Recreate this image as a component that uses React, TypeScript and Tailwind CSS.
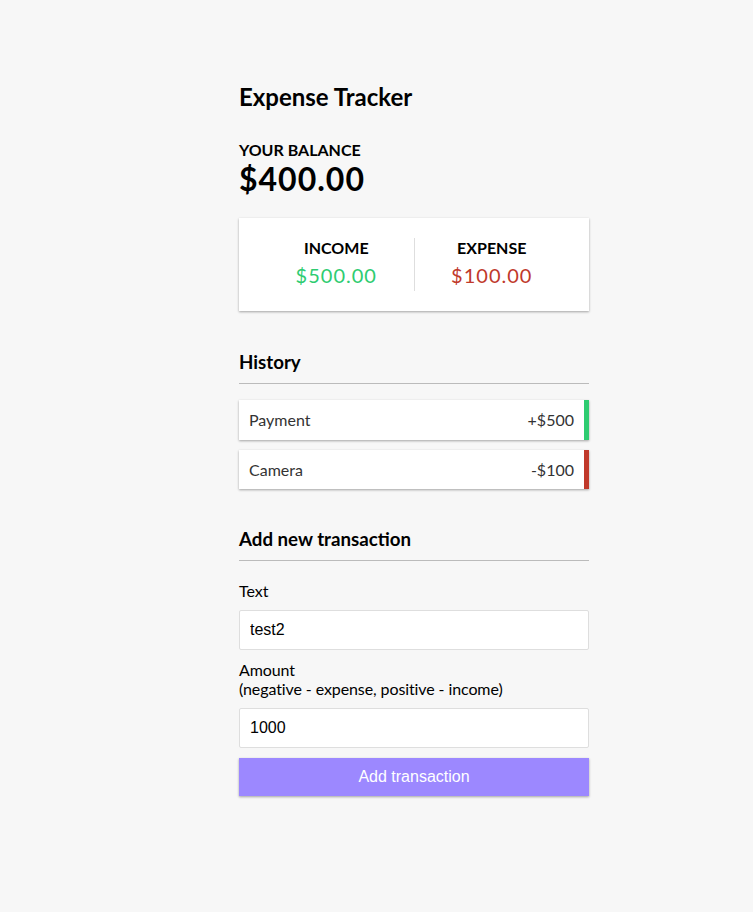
import React from 'react';

const transactions = [
  { id: 1, text: 'Payment', amount: '+$500', plus: true },
  { id: 2, text: 'Camera', amount: '-$100', plus: false },
];

const shadow = 'shadow-[0_1px_3px_rgba(0,0,0,0.12),0_1px_2px_rgba(0,0,0,0.24)]';

export default function App() {
  return (
    <div className="min-h-screen bg-[#f7f7f7] font-['Lato',sans-serif] leading-[1.2] text-black">
      <div className="w-[350px] ml-[239px] pt-[83px] pb-[60px]">
        <h2 className="text-[24px] font-bold">Expense Tracker</h2>

        <h4 className="mt-[28px] text-[16px] font-bold uppercase">Your Balance</h4>
        <h1 className="mt-[1px] text-[32px] font-bold tracking-[1px]">$400.00</h1>

        <div className={`mt-[20px] flex h-[93px] justify-between bg-white p-5 ${shadow}`}>
          <div className="flex-1 border-r border-[#dedede] text-center">
            <h4 className="text-[16px] font-bold uppercase">Income</h4>
            <p className="my-[5px] text-[20px] tracking-[1px] text-[#2ecc71]">$500.00</p>
          </div>
          <div className="flex-1 text-center">
            <h4 className="text-[16px] font-bold uppercase">Expense</h4>
            <p className="my-[5px] text-[20px] tracking-[1px] text-[#c0392b]">$100.00</p>
          </div>
        </div>

        <h3 className="mt-10 border-b border-[#bbb] pb-[10px] text-[18.72px] leading-[22px] font-bold">History</h3>
        <ul className="mt-4 mb-[39px] flex flex-col gap-[10px]">
          {transactions.map((t) => (
            <li
              key={t.id}
              className={`flex justify-between bg-white p-[10px] text-[#333] ${shadow} border-r-[5px] ${
                t.plus ? 'border-[#2ecc71]' : 'border-[#c0392b]'
              }`}
            >
              <span>{t.text}</span>
              <span>{t.amount}</span>
            </li>
          ))}
        </ul>

        <h3 className="border-b border-[#bbb] pb-[10px] text-[18.72px] leading-[22px] font-bold">Add new transaction</h3>
        <form className="mt-[10px]">
          <div>
            <label className="my-[10px] inline-block">Text</label>
            <input
              type="text"
              defaultValue="test2"
              className="block w-full rounded-[2px] border border-[#dedede] bg-white p-[10px] font-['Liberation_Sans',Arial,sans-serif] text-[16px] leading-[18px] text-black"
            />
          </div>
          <div>
            <label className="my-[10px] inline-block tracking-[-0.1px]">
              Amount <br />
              (negative - expense, positive - income)
            </label>
            <input
              type="number"
              defaultValue="1000"
              className="block w-full rounded-[2px] border border-[#dedede] bg-white p-[10px] font-['Liberation_Sans',Arial,sans-serif] text-[16px] leading-[18px] text-black [appearance:textfield]"
            />
          </div>
          <button
            type="button"
            className={`mt-[10px] block w-full bg-[#9c88ff] p-[10px] font-['Liberation_Sans',Arial,sans-serif] text-[16px] leading-[18px] text-white ${shadow}`}
          >
            Add transaction
          </button>
        </form>
      </div>
    </div>
  );
}
